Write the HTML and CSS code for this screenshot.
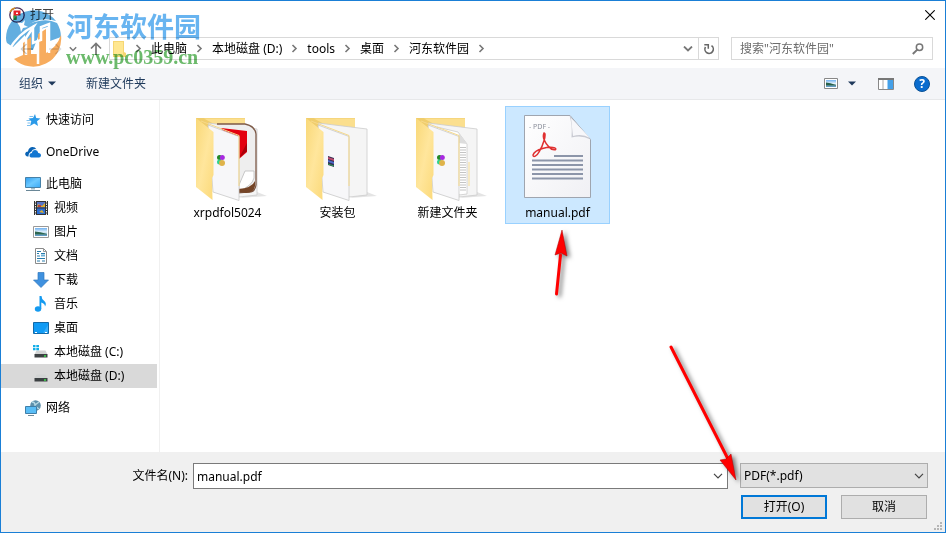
FILE: index.html
```html
<!DOCTYPE html>
<html lang="zh-CN">
<head>
  <meta charset="UTF-8">
  <title>打开</title>
  <link rel="stylesheet" href="styles.css">
</head>
<body>
  <svg class="defs" aria-hidden="true">
    <symbol id="crumb" viewBox="0 0 25 9"><path d="M10.500 1l3.500 3.500L10.500 8" fill="none" stroke="#777" stroke-width="1.600"/></symbol>
    <symbol id="down" viewBox="0 0 10 6"><path d="M1 .8l4 4 4-4" fill="none" stroke="currentColor" stroke-width="1.200"/></symbol>
    <linearGradient id="flap" x1="0" x2="1" y1="0" y2="1"><stop offset="0" stop-color="#f9d878"/><stop offset=".5" stop-color="#ffe69c"/><stop offset="1" stop-color="#fbd979"/></linearGradient>
    <linearGradient id="paper" x1="0" x2="1" y1="0" y2="1"><stop offset="0" stop-color="#fff"/><stop offset="1" stop-color="#f0f0f4"/></linearGradient>
    <linearGradient id="screen" x1="0" x2="1" y1="0" y2="1"><stop offset="0" stop-color="#2f9df0"/><stop offset=".5" stop-color="#6cc9ff"/><stop offset="1" stop-color="#39a9f5"/></linearGradient>
    <linearGradient id="sky" x2="0" y2="1"><stop offset="0" stop-color="#6fb0f0"/><stop offset=".5" stop-color="#e4f2fb"/><stop offset=".7" stop-color="#9cc4d8"/><stop offset="1" stop-color="#4e8fc0"/></linearGradient>
    <symbol id="folder-back" viewBox="0 0 84 95">
      <path d="M50 88l27-2-10-4z" fill="#e4e4e4"/>
      <path d="M6 8h49v60H6z" fill="#f0cd6c"/>
      <path d="M14 8.500h41v12l-32-7z" fill="#fbdf8e"/>
      <path d="M18 13l49 6v66l-18 2z" fill="#f5f5f5" stroke="#ccc" stroke-width=".8"/>
    </symbol>
    <symbol id="folder-front" viewBox="0 0 84 95">
      <path d="M18 15l31 11.500v64L23 82z" fill="#f7f7f9" stroke="#c9c9c9" stroke-width=".8"/>
      <path d="M11 11l38 14.500V76" fill="none" stroke="#f6d98a" stroke-width="1"/>
      <path d="M6 8l17.500 14v43L22 68l.5 22L6 77z" fill="url(#flap)"/>
    </symbol>
    <symbol id="pinwheel" viewBox="0 0 8 13">
      <circle cx="2.500" cy="3.500" r="2.500" fill="#218a22"/><circle cx="5.300" cy="3.500" r="2.500" fill="#a72be0"/>
      <circle cx="2.500" cy="8" r="2.500" fill="#2fd38b"/><circle cx="5" cy="9" r="3" fill="#dfb34a"/>
    </symbol>
    <symbol id="disk" viewBox="0 0 16 16">
      <path d="M3.500 6.500h9l2 4h-13z" fill="#d2d4d4"/><path d="M1.500 10h13v3.500h-13z" fill="#3c4143"/><circle cx="12" cy="12" r="1" fill="#3be04b"/>
    </symbol>
    <symbol id="picture" viewBox="0 0 16 16">
      <path d="M.5 2.500h15v11H.5z" fill="#fff" stroke="#999"/><path d="M2 4h12v8H2z" fill="url(#sky)"/><path d="M2 7.500q5 0 12 2.500v.6H2z" fill="#2d6650"/>
    </symbol>
  </svg>

  <div class="dialog">
    <header class="titlebar">
      <svg class="app-icon" viewBox="0 0 16 16"><circle cx="8" cy="8" r="7.200" fill="#fff" stroke="#4b2e59" stroke-width="1.300"/><path d="M1 5a7.500 7.500 0 0 1 5-4" fill="none" stroke="#d18a21" stroke-width="1.500"/><path d="M4.500 3.500h7v5h-4v4h-3z" fill="#e5202a"/><path d="M7 5.500h2v1.500H7z" fill="#fff"/><path d="M4.500 8.500h3v4.500h-3z" fill="#27a149"/></svg>
      <h1 class="title">打开</h1>
      <button class="close" aria-label="关闭"><svg viewBox="0 0 10 10"><path d="M.3.300l9.400 9.400M9.700.300L.3 9.700" stroke="#000" stroke-width="1.100"/></svg></button>
    </header>

    <nav class="navbar">
      <button class="nav-btn" aria-label="后退"><svg viewBox="0 0 14 12"><path d="M13 6H2M6.500 1l-5 5 5 5" fill="none" stroke="#ccc" stroke-width="1.500"/></svg></button>
      <button class="nav-btn" aria-label="前进"><svg viewBox="0 0 14 12"><path d="M1 6h11M7.500 1l5 5-5 5" fill="none" stroke="#ddd" stroke-width="1.500"/></svg></button>
      <button class="nav-btn nav-recent" aria-label="最近位置"><svg viewBox="0 0 10 6"><path d="M1 .8l4 4 4-4" fill="none" stroke="#777" stroke-width="1.800"/></svg></button>
      <button class="nav-btn nav-up" aria-label="上移"><svg viewBox="0 0 12 13"><path d="M6 13V2M1 6.500l5-5 5 5" fill="none" stroke="#777" stroke-width="1.700"/></svg></button>
      <div class="address">
        <svg class="address-icon" viewBox="0 0 13 16"><path d="M0 0h11v11l2 1v4H0z" fill="#f6d673"/><path d="M1 1h9v14H1z" fill="#ffe790"/></svg>
        <ol class="crumbs">
          <li><svg class="crumb-sep"><use href="#crumb"/></svg><a href="#">此电脑</a></li>
          <li><svg class="crumb-sep"><use href="#crumb"/></svg><a href="#">本地磁盘 (D:)</a></li>
          <li><svg class="crumb-sep"><use href="#crumb"/></svg><a href="#">tools</a></li>
          <li><svg class="crumb-sep"><use href="#crumb"/></svg><a href="#">桌面</a></li>
          <li><svg class="crumb-sep"><use href="#crumb"/></svg><a href="#">河东软件园</a></li>
          <li><svg class="crumb-sep"><use href="#crumb"/></svg></li>
        </ol>
        <button class="address-drop" aria-label="以前的位置"><svg viewBox="0 0 10 6"><path d="M1 .5l4 4 4-4" fill="none" stroke="#777" stroke-width="1.800"/></svg></button>
        <button class="refresh" aria-label="刷新"><svg viewBox="0 0 12 12"><path d="M8.500 2.700a4.200 4.200 0 1 1-6 1.300" fill="none" stroke="#666" stroke-width="1.600"/><path d="M1.300 1.700h4v4" fill="none" stroke="#666" stroke-width="1.500"/></svg></button>
      </div>
      <div class="search">
        <input class="search-input" type="text" aria-label="搜索" placeholder='搜索"河东软件园"'>
        <svg class="search-icon" viewBox="0 0 12 12"><circle cx="7.500" cy="4.300" r="3.200" fill="none" stroke="#777" stroke-width="1.500"/><path d="M5.300 6.600L.8 11" stroke="#777" stroke-width="2"/></svg>
      </div>
    </nav>

    <div class="toolbar">
      <button class="tool">组织 <svg class="caret" viewBox="0 0 8 5"><path d="M0 .5h8l-4 4z" fill="#1e395b"/></svg></button>
      <button class="tool">新建文件夹</button>
      <div class="tool-right">
        <button class="tool-icon" aria-label="视图"><svg class="view-icon" viewBox="0 0 14 11"><path d="M.5.500h13v10H.5z" fill="#fff" stroke="#888"/><path d="M2 2h10v7H2z" fill="url(#sky)"/><path d="M2 4.500q4 0 10 2.500v.5H2z" fill="#28614b"/></svg></button>
        <button class="tool-icon" aria-label="更多选项"><svg class="caret" viewBox="0 0 8 5"><path d="M0 .5h8l-4 4z" fill="#1e395b"/></svg></button>
        <button class="tool-icon" aria-label="预览窗格"><svg class="pane-icon" viewBox="0 0 16 12"><path d="M.5.500h15v11H.5z" fill="#fff" stroke="#888"/><path d="M0 0h16v2H0z" fill="#777"/><path d="M5 2v9" stroke="#aaa"/><path d="M9.500 2H15v9H9.500z" fill="#45a0e8"/></svg></button>
        <button class="tool-icon" aria-label="帮助"><span class="help">?</span></button>
      </div>
    </div>

    <main class="content">
      <nav class="sidebar">
        <ul class="group">
          <li><a class="place" href="#"><svg viewBox="0 0 16 16"><path d="M10 2l1.200 4 4.300.5-3.500 2.800 1 4.700-3.800-2.500L5 14l1.300-4.500L3.500 6.500l4.500-.4z" fill="#2b9ae8"/><path d="M4.500 4.500H8M1.500 8.500h4M2.500 11h3M2 13.500h3" stroke="#7dbfee"/></svg>快速访问</a></li>
        </ul>
        <ul class="group">
          <li><a class="place" href="#"><svg viewBox="0 0 16 16"><path d="M3.500 12.500H2.800Q0 12 .2 9.500.5 7.500 3 7.500q.5-4 4-4.500 3-.3 4.400 2.200-3.900-.7-5.100 2.500Q3.300 9 3.500 12.500z" fill="#0a63b5"/><path d="M6 13.500Q4.200 13 4.500 11q.3-1.700 2.400-1.900Q7.300 6 10.200 6q2.600.2 3.100 3 2.700.1 2.700 2.500-.2 2-2 2z" fill="#1377d2"/></svg>OneDrive</a></li>
        </ul>
        <ul class="group">
          <li><a class="place" href="#"><svg viewBox="0 0 16 16"><path d="M.5 1.500h15v10H.5z" fill="url(#screen)" stroke="#4681a8"/><path d="M6 12h4v1.500H6z" fill="#a2bdca"/><path d="M1 14.500h14" stroke="#6a8797"/></svg>此电脑</a></li>
          <li><a class="place child" href="#"><svg viewBox="0 0 16 16"><path d="M1 1h14v14H1z" fill="#333"/><path d="M2.500 1v14M13.500 1v14" stroke="#eee" stroke-dasharray="1.500 1"/><path d="M4 2h8v5.500H4z" fill="#5874c5"/><path d="M4 8.500h8V14H4z" fill="#2b6dd4"/><path d="M5 4l4 2 3-3v4H4zM6 12l3-2 2 3z" fill="#e0b02c"/><path d="M5 5h3v2H5z" fill="#ba4335"/></svg>视频</a></li>
          <li><a class="place child" href="#"><svg><use href="#picture"/></svg>图片</a></li>
          <li><a class="place child" href="#"><svg viewBox="0 0 16 16"><path d="M2.500.500h8l3 3v12h-11z" fill="#fff" stroke="#8a8a8a"/><path d="M10.500.500v3h3" fill="none" stroke="#999"/><path d="M4 3.500h4M4 5.500h2M8 5.500h4M4 8h3M4 10.500h8M4 13h3M9 13h3" stroke="#287cac"/><path d="M8 7.500h4" stroke="#6db0d6" stroke-width="2"/></svg>文档</a></li>
          <li><a class="place child" href="#"><svg viewBox="0 0 16 16"><path d="M5 .5h6V8h4.500L8 15.500.5 8H5z" fill="#3f91df" stroke="#3179bd" stroke-width=".7"/></svg>下载</a></li>
          <li><a class="place child" href="#"><svg viewBox="0 0 16 16"><ellipse cx="5" cy="13" rx="3.200" ry="2.700" fill="#149af0"/><path d="M6.500 0h2q0 3 2.800 5 2.700 2.500.7 5.500 0-3-3.700-4v6.500H6.500z" fill="#149af0"/></svg>音乐</a></li>
          <li><a class="place child" href="#"><svg viewBox="0 0 16 16"><path d="M.5 2.500h15v11H.5z" fill="#109bf5" stroke="#1269a8"/><path d="M10 13l5-8v8z" fill="#35aefb"/><path d="M2 12.500h2M12 12.500h2" stroke="#fff"/></svg>桌面</a></li>
          <li><a class="place child" href="#"><svg viewBox="0 0 16 16"><use href="#disk"/><path d="M0 1h2.500v2.300H0zM3.300 1H6v2.300H3.300zM0 4h2.500v2.300H0zM3.300 4H6v2.300H3.300z" fill="#12aee8"/></svg>本地磁盘 (C:)</a></li>
          <li><a class="place child selected" href="#"><svg viewBox="0 0 16 16"><use href="#disk"/></svg>本地磁盘 (D:)</a></li>
        </ul>
        <ul class="group">
          <li><a class="place" href="#"><svg viewBox="0 0 16 16"><circle cx="10.500" cy="5.500" r="5.300" fill="#5f91ac"/><path d="M7 2q3 0 3 3l4-3M10 6l4 3" fill="none" stroke="#b8dae6" stroke-width="1.300"/><path d="M.5 6.500h11v7H.5z" fill="#59bdf6" stroke="#3f7fa9"/><path d="M3 15.500h6" stroke="#728b98"/></svg>网络</a></li>
        </ul>
      </nav>

      <section class="files">
        <button class="file">
          <svg class="thumb" viewBox="-4 0 84 95"><use href="#folder-back" width="84" height="95"/><path d="M27 14h28q10 2 11 10v51q-1 8-9 7l-12 1" fill="#eee" stroke="#7d5a48" stroke-width="1.300"/><path d="M31 18l26 3v21l-8 7z" fill="#e3000f"/><path d="M49 48l8-7v-8z" fill="#a80009"/><path d="M49 75l6-14h9v7q-2 8-15 13z" fill="#fff" stroke="#bbb" stroke-width=".8"/><path d="M48 79q14-1 17-8v5q-1 7-9 7l-8-1z" fill="#754527"/><use href="#folder-front" width="84" height="95"/><use href="#pinwheel" x="27" y="44" width="8" height="13"/></svg>
          <span>xrpdfol5024</span>
        </button>
        <button class="file">
          <svg class="thumb" viewBox="-4 0 84 95"><use href="#folder-back" width="84" height="95"/><use href="#folder-front" width="84" height="95"/><path d="M28 46l6 2v9l-6-2z" fill="#342e52"/><path d="M28 47l6 2v2l-6-2z" fill="#bd496e"/><path d="M28 50l6 2v2l-6-2z" fill="#4b6ac9"/><path d="M28 54l6 2" stroke="#2b9b55"/></svg>
          <span>安装包</span>
        </button>
        <button class="file">
          <svg class="thumb" viewBox="-4 0 84 95"><use href="#folder-back" width="84" height="95"/><path d="M27 17l21 5 9 12v50l-8 1z" fill="#fff" stroke="#ccc" stroke-width=".8"/><path d="M49 23l8 11-9-1z" fill="#ddd"/><path d="M53 37v44" stroke="#c4c4c4" stroke-width="6" stroke-dasharray="1 1.500"/><path d="M59 52v24" stroke="#f6d67c" stroke-width=".8"/><use href="#folder-front" width="84" height="95"/><use href="#pinwheel" x="27" y="44" width="8" height="13"/></svg>
          <span>新建文件夹</span>
        </button>
        <button class="file active">
          <svg class="thumb" viewBox="6 0 84 95"><path d="M14.500 5.500H60l20.500 24V87.500h-66z" fill="url(#paper)" stroke="#9fa5af"/><path d="M59.500 5.500l21 24q-9-5-19-2 1-13-2-22z" fill="#c8c9d1"/><path d="M61 8l19 20q-8-5-17-2z" fill="#f7f7fa"/><text x="19" y="19" class="pdf-tag">- PDF -</text><path d="M23 45c2-6 16-9 22-7 3 2-3 3-6-1-4-4-7-10-5-14 3 0-1 13-5 19-2 4-6 6-6 3z" fill="none" stroke="#e03030" stroke-width="1.500"/><path d="M44 46h29M22 50.500h51M22 55h51M22 59.500h51M22 64h51M22 68.500h51" stroke="#8c95a9" stroke-width="1.800"/></svg>
          <span>manual.pdf</span>
        </button>
      </section>
    </main>

    <footer class="footer">
      <label class="name-label" for="filename">文件名(N):</label>
      <div class="combo">
        <input id="filename" type="text" value="manual.pdf">
        <button class="combo-btn" aria-label="展开"><svg viewBox="0 0 10 6"><use href="#down"/></svg></button>
      </div>
      <div class="type">
        <select aria-label="文件类型"><option>PDF(*.pdf)</option></select>
        <svg viewBox="0 0 10 6"><use href="#down"/></svg>
      </div>
      <div class="actions">
        <button class="btn primary">打开(O)</button>
        <button class="btn">取消</button>
      </div>
      <svg class="grip" viewBox="0 0 8 8"><path d="M6 0h2v2H6zM3 3h2v2H3zM6 3h2v2H6zM0 6h2v2H0zM3 6h2v2H3zM6 6h2v2H6z" fill="#b5b5b5"/></svg>
    </footer>

    <div class="watermark">
      <svg class="wm-logo" viewBox="0 0 58 58">
        <path d="M1 29A28 28 0 0 1 51 12Q32 6 16 22L8 34H2Q1 32 1 29z" fill="#62aee0"/>
        <path d="M2 34Q12 16 34 12q10-2 18 2a28 28 0 0 1 4 14L45 32V17l-9 3-8 21h-8V26L8 38z" fill="#62aee0"/>
        <path d="M56 26A28 28 0 0 1 9 50l9-4V34l8-6v17h7V25l8-5v24Q52 38 56 26z" fill="#f7ac5e"/>
        <path d="M4 41Q13 25 29 17l-8 12v17M28 17v17l8-3V18l8-3v29M33 32v23" fill="none" stroke="#fff" stroke-width="2.500"/>
        <path d="M12 13l5 1 3-3-1 5 4 2-5 1-2 4-1-5z" fill="#fff"/>
      </svg>
      <div class="wm-text"><span class="wm-name">河东软件园</span><span class="wm-url">www.pc0359.cn</span></div>
    </div>

    <svg class="arrow arrow-file" viewBox="0 0 26 76"><path d="M10.500 68L14.500 29" stroke="#f00" stroke-width="3" stroke-linecap="round"/><path d="M16 4l5 26-6-3-6 2z" fill="#f00" stroke="#a00" stroke-width=".5"/></svg>
    <svg class="arrow arrow-type" viewBox="0 0 80 146"><path d="M6 6l57 112" stroke="#f00" stroke-width="3" stroke-linecap="round"/><path d="M71 139l-16-20 6-1 5-5z" fill="#f00" stroke="#a00" stroke-width=".5"/></svg>
  </div>
</body>
</html>
```
FILE: styles.css
```css
* {
  box-sizing: border-box;
}

body {
  margin: 0;
  font-family: "Noto Sans", "Noto Sans CJK SC", sans-serif;
  font-size: 12px;
  line-height: 16px;
  color: #000;
}

button,
input,
select {
  font: inherit;
  color: inherit;
}

button {
  padding: 0;
  border: 0;
  background: none;
}

a {
  color: inherit;
  text-decoration: none;
}

ul,
ol {
  margin: 0;
  padding: 0;
  list-style: none;
}

svg {
  display: block;
  flex: none;
}

.defs {
  position: absolute;
  width: 0;
  height: 0;
}

.dialog {
  position: relative;
  display: flex;
  flex-direction: column;
  min-height: 100vh;
  border: 1px solid #1a7fd6;
  background: #fff;
}

/* title bar */
.titlebar {
  display: flex;
  align-items: center;
  height: 28px;
  padding: 0 10px 0 8px;
}

.app-icon {
  width: 16px;
  height: 16px;
}

.title {
  margin: 0 auto 0 5px;
  font-size: 12px;
  font-weight: normal;
  color: #444;
}

.close svg {
  width: 10px;
  height: 10px;
}

/* address row */
.navbar {
  display: flex;
  align-items: center;
  padding: 8px 12px;
}

.nav-btn {
  display: flex;
  justify-content: center;
  width: 28px;
}

.nav-btn svg {
  width: 14px;
  height: 12px;
}

.nav-btn.nav-recent {
  width: 8px;
}

.nav-recent svg {
  width: 8px;
  height: 6px;
}

.nav-btn.nav-up {
  width: 32px;
  padding-left: 6px;
}

.nav-up svg {
  height: 13px;
}

.address {
  flex: 1;
  display: flex;
  align-items: center;
  height: 23px;
  padding-left: 3px;
  border: 1px solid #d9d9d9;
}

.address-icon {
  width: 13px;
  height: 16px;
}

.crumbs {
  flex: 1;
  display: flex;
}

.crumbs li {
  display: flex;
  align-items: center;
}

.crumb-sep {
  width: 25px;
  height: 9px;
}

.address-drop,
.refresh {
  display: flex;
  align-items: center;
  justify-content: center;
  width: 20px;
  height: 21px;
}

.address-drop svg {
  width: 10px;
  height: 6px;
}

.refresh {
  border-left: 1px solid #d9d9d9;
}

.refresh svg {
  width: 12px;
  height: 12px;
}

.search {
  flex: 0 0 202px;
  min-width: 0;
  display: flex;
  align-items: center;
  height: 23px;
  margin-left: 12px;
  padding: 0 8px;
  border: 1px solid #d9d9d9;
}

.search-input {
  flex: 1;
  min-width: 0;
  padding: 0;
  border: 0;
  outline: 0;
}

.search-input::placeholder {
  color: #6d6d6d;
}

.search-icon {
  width: 12px;
  height: 12px;
}

/* toolbar */
.toolbar {
  display: flex;
  align-items: center;
  gap: 30px;
  height: 32px;
  padding: 0 15px 0 18px;
  border-bottom: 1px solid #e7e8ea;
  background: #f4f5f8;
}

.tool {
  display: flex;
  align-items: center;
  gap: 5px;
  color: #1e395b;
}

.caret {
  width: 8px;
  height: 5px;
}

.tool-right {
  display: flex;
  align-items: center;
  margin-left: auto;
}

.view-icon {
  width: 14px;
  height: 11px;
  margin-right: 10px;
}

.pane-icon {
  width: 16px;
  height: 12px;
  margin: 0 20px 0 22px;
}

.help {
  display: block;
  width: 16px;
  border: 1px solid #0a5196;
  border-radius: 50%;
  background: #0a6cce;
  color: #fff;
  font-weight: bold;
  line-height: 14px;
}

/* places + files */
.content {
  flex: 1;
  display: flex;
}

.sidebar {
  flex: 0 0 159px;
  padding: 8px 2px 8px 0;
  border-right: 1px solid #f0f0f0;
}

.group + .group {
  margin-top: 8px;
}

.place {
  display: flex;
  align-items: center;
  gap: 5px;
  height: 24px;
  padding-left: 24px;
}

.place svg {
  width: 16px;
  height: 16px;
}

.child {
  padding-left: 32px;
}

.selected {
  background: #d9d9d9;
}

.files {
  flex: 1;
  display: flex;
  flex-wrap: wrap;
  align-content: flex-start;
  gap: 5px;
  padding: 6px 15px;
}

.file {
  display: flex;
  flex-direction: column;
  align-items: center;
  width: 105px;
  height: 118px;
  padding-top: 3px;
  border: 1px solid transparent;
}

.active {
  border-color: #99d1ff;
  background: #cce8ff;
}

.thumb {
  width: 84px;
  height: 95px;
}

.pdf-tag {
  font-size: 7px;
  fill: #8b8f9b;
}

/* file name and buttons */
.footer {
  position: relative;
  display: grid;
  grid-template-columns: 187px 1fr 188px;
  row-gap: 6px;
  padding: 11px 17px 13px 0;
  background: #f0f0f0;
}

.name-label {
  padding: 5px 0;
  text-align: right;
}

.combo {
  display: flex;
  height: 26px;
  margin: 0 12px 0 5px;
  border: 1px solid #7a7a7a;
  background: #fff;
}

.combo input {
  flex: 1;
  min-width: 0;
  padding: 1px 3px 0;
  border: 0;
  outline: 0;
}

.combo-btn {
  display: flex;
  align-items: center;
  justify-content: center;
  width: 18px;
  color: #444;
}

.combo-btn svg,
.type svg {
  width: 10px;
  height: 6px;
}

.type {
  display: grid;
  align-items: center;
  height: 25px;
  color: #444;
}

.type select,
.type svg {
  grid-area: 1 / 1;
}

.type select {
  height: 25px;
  padding: 0 3px;
  border: 1px solid #adadad;
  border-radius: 0;
  background: #e1e1e1;
  color: #000;
  appearance: none;
}

.type svg {
  justify-self: end;
  margin-right: 4px;
  pointer-events: none;
}

.actions {
  grid-column: 3;
  display: flex;
  justify-content: space-between;
  padding: 0 1px;
}

.btn {
  width: 86px;
  height: 24px;
  border: 1px solid #adadad;
  background: #e1e1e1;
}

.primary {
  border: 2px solid #0078d7;
}

.grip {
  position: absolute;
  right: 3px;
  bottom: 2px;
  width: 8px;
  height: 8px;
}

/* site mark over the top left corner */
.watermark {
  position: absolute;
  top: 8px;
  left: 4px;
  display: flex;
  gap: 3px;
  mix-blend-mode: multiply;
  pointer-events: none;
}

.wm-logo {
  width: 58px;
  height: 58px;
}

.wm-text {
  display: flex;
  flex-direction: column;
}

.wm-name {
  font-family: "Liberation Serif", "Noto Sans CJK SC", serif;
  font-size: 27px;
  font-weight: bold;
  line-height: 38px;
  color: #68b4f0;
}

.wm-url {
  font-family: "Liberation Serif", serif;
  font-size: 20px;
  font-weight: bold;
  line-height: 20px;
  color: #6cba6c;
}

/* pointer arrows */
.arrow {
  position: absolute;
  filter: drop-shadow(3px 2px 2px rgba(0, 0, 0, 0.5));
  pointer-events: none;
}

.arrow-file {
  top: 225px;
  left: 545px;
  width: 26px;
  height: 76px;
}

.arrow-type {
  top: 340px;
  left: 664px;
  width: 80px;
  height: 146px;
}
```
